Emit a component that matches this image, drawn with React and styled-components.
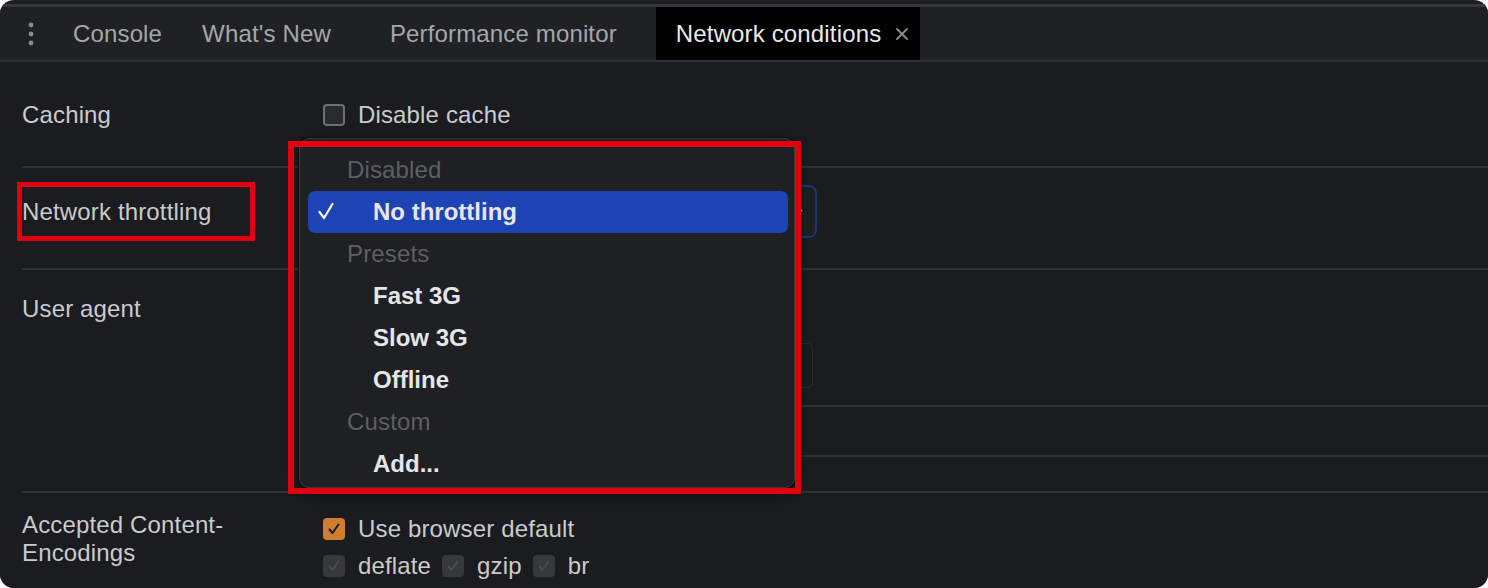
import React from "react";
import styled, { createGlobalStyle } from "styled-components";

const GlobalStyle = createGlobalStyle`
  html, body {
    margin: 0;
    background: #ffffff;
  }
`;

const Window = styled.div`
  width: 1488px;
  height: 588px;
  box-sizing: border-box;
  padding-top: 4px;
  border-radius: 14px;
  overflow: hidden;
  background: #1e1f22;
  font-family: "Liberation Sans", Arial, sans-serif;
  font-size: 24px;
  letter-spacing: 0.15px;
  color: #c9cbcf;
  display: flex;
  flex-direction: column;
`;

const TabBar = styled.div`
  height: 53px;
  display: flex;
  align-items: stretch;
  background: #202124;
  border-top: 3px solid #36373a;
  border-bottom: 2px solid #2e2f32;
`;

const MenuDots = styled.div`
  width: 53px;
  display: flex;
  align-items: center;
  justify-content: center;
  padding-left: 9px;
  box-sizing: border-box;
`;

const Tab = styled.div`
  display: flex;
  align-items: center;
  padding: ${(p) => (p.$closeable ? "0 11px 0 20px" : "0 20px")};
  background: ${(p) => (p.$active ? "#000000" : "transparent")};
  color: ${(p) => (p.$active ? "#e8e9eb" : "#a4a7ab")};
  white-space: nowrap;
`;

const CloseSlot = styled.span`
  width: 14px;
  height: 14px;
  margin-left: 14px;
  display: flex;
  align-items: center;
  justify-content: center;
`;

const Body = styled.div`
  flex: 1;
  background: #1b1c1f;
`;

const Section = styled.div`
  display: grid;
  grid-template-columns: 301px 1fr;
  margin-left: 22px;
  padding: ${(p) => p.$pad};
  border-bottom: 2px solid #313235;
  align-items: ${(p) => (p.$center ? "center" : "start")};

  &:last-child {
    border-bottom: none;
  }
`;

const Label = styled.div`
  line-height: 28px;
  padding-right: 40px;
`;

const MarkedLabel = styled.div`
  width: 228px;
  height: 49px;
  display: flex;
  align-items: center;
  outline: 5px solid #e3000e;
`;

const Check = styled.label`
  display: flex;
  align-items: center;
  gap: 13px;
  height: ${(p) => p.$h || 28}px;
  color: #c9cbcf;
`;

const Box = styled.span`
  width: 22px;
  height: 22px;
  box-sizing: border-box;
  border-radius: 4px;
  display: flex;
  align-items: center;
  justify-content: center;
  flex-shrink: 0;
  background: ${(p) =>
    p.$variant === "checked" ? "#cf7f2c" : p.$variant === "disabled" ? "#37383b" : "#2a2b2e"};
  border: ${(p) => (p.$variant === "plain" ? "2px solid #6e7074" : "none")};
`;

const CheckRow = styled.div`
  display: flex;
  align-items: center;
  gap: 11px;
`;

const SelectWrap = styled.div`
  position: relative;
  width: 494px;
  height: 53px;
`;

const SelectBox = styled.div`
  height: 100%;
  box-sizing: border-box;
  border: 2px solid #1b3670;
  border-radius: 8px;
  background: #1e1f22;
  display: flex;
  align-items: center;
  justify-content: flex-end;
  padding-right: 12px;
`;

const Menu = styled.div`
  position: absolute;
  left: -24px;
  top: -47px;
  width: 496px;
  height: 350px;
  box-sizing: border-box;
  padding: 10px 6px 2px 8px;
  background: #1f2023;
  border: 1px solid #3a3b3e;
  border-radius: 10px;
  box-shadow: 0 0 0 1px #0b0b0c, 0 6px 18px rgba(0, 0, 0, 0.5);
  z-index: 2;
`;

const MenuHeader = styled.div`
  height: 42px;
  display: flex;
  align-items: center;
  padding-left: 39px;
  color: #5d5f63;
`;

const MenuOption = styled.div`
  height: 42px;
  display: grid;
  grid-template-columns: 55px 1fr;
  align-items: center;
  padding-left: 10px;
  border-radius: 7px;
  font-weight: 700;
  letter-spacing: 0;
  color: #e6e6e8;
  background: ${(p) => (p.$selected ? "#1d43b4" : "transparent")};
`;

const Annotation = styled.div`
  position: absolute;
  left: -35px;
  top: -44px;
  width: 513px;
  height: 353px;
  box-sizing: border-box;
  border: 6px solid #e3000e;
  z-index: 3;
  pointer-events: none;
`;

const AgentColumn = styled.div`
  display: flex;
  flex-direction: column;
`;

const Spacer = styled.div`
  height: ${(p) => p.$h}px;
`;

const AgentInput = styled.div`
  width: 490px;
  height: 45px;
  margin-top: 20px;
  box-sizing: border-box;
  border: 1px solid #2c2d30;
  border-radius: 5px;
`;

const HintBlock = styled.div`
  height: ${(p) => p.$h}px;
  box-sizing: border-box;
  margin-top: ${(p) => p.$mt || 0}px;
  border-top: ${(p) => (p.$line ? "2px solid #313235" : "none")};
`;

const EncodingColumn = styled.div`
  display: flex;
  flex-direction: column;
`;

const Dots = () => (
  <svg width="8" height="26" viewBox="0 0 8 26">
    <circle cx="4" cy="4" r="2.4" fill="#8a8b8f" />
    <circle cx="4" cy="13" r="2.4" fill="#8a8b8f" />
    <circle cx="4" cy="22" r="2.4" fill="#8a8b8f" />
  </svg>
);

const CloseIcon = () => (
  <svg width="14" height="14" viewBox="0 0 14 14">
    <path d="M2 2 L12 12 M12 2 L2 12" stroke="#8d8e91" strokeWidth="1.8" strokeLinecap="round" />
  </svg>
);

const Tick = ({ color = "#1b1c1f", size = 14 }) => (
  <svg width={size} height={size} viewBox="0 0 14 14">
    <path d="M2.5 7.5 L5.5 11 L11.5 2.5" stroke={color} strokeWidth="2" fill="none" strokeLinecap="round" strokeLinejoin="round" />
  </svg>
);

const MenuTick = () => (
  <svg width="16" height="18" viewBox="0 0 16 18">
    <path d="M1.5 10 L6 16 L14.5 2" stroke="#ffffff" strokeWidth="2.2" fill="none" strokeLinecap="round" strokeLinejoin="round" />
  </svg>
);

const Caret = () => (
  <svg width="10" height="8" viewBox="0 0 10 8">
    <path d="M1 2 L5 6 L9 2" stroke="#8d8e91" strokeWidth="1.6" fill="none" />
  </svg>
);

const tabs = [
  { name: "Console" },
  { name: "What's New", closeable: true },
  { name: "Performance monitor", closeable: true },
  { name: "Network conditions", closeable: true, active: true },
];

const options = [
  { kind: "header", text: "Disabled" },
  { kind: "option", text: "No throttling", selected: true },
  { kind: "header", text: "Presets" },
  { kind: "option", text: "Fast 3G" },
  { kind: "option", text: "Slow 3G" },
  { kind: "option", text: "Offline" },
  { kind: "header", text: "Custom" },
  { kind: "option", text: "Add..." },
];

const App = () => {
  return (
    <>
      <GlobalStyle />
      <Window>
        <TabBar>
          <MenuDots>
            <Dots />
          </MenuDots>
          {tabs.map((t) => (
            <Tab key={t.name} $active={t.active} $closeable={t.closeable}>
              {t.name}
              {t.closeable && <CloseSlot>{t.active && <CloseIcon />}</CloseSlot>}
            </Tab>
          ))}
        </TabBar>

        <Body>
          <Section $pad="39px 0 37px">
            <Label>Caching</Label>
            <Check>
              <Box $variant="plain" />
              Disable cache
            </Check>
          </Section>

          <Section $pad="17px 0 30px" $center>
            <MarkedLabel>Network throttling</MarkedLabel>
            <SelectWrap>
              <SelectBox>
                <Caret />
              </SelectBox>
              <Menu>
                {options.map((o) =>
                  o.kind === "header" ? (
                    <MenuHeader key={o.text}>{o.text}</MenuHeader>
                  ) : (
                    <MenuOption key={o.text} $selected={o.selected}>
                      <span>{o.selected && <MenuTick />}</span>
                      <span>{o.text}</span>
                    </MenuOption>
                  )
                )}
              </Menu>
              <Annotation />
            </SelectWrap>
          </Section>

          <Section $pad="25px 0 0">
            <Label>User agent</Label>
            <AgentColumn>
              <Spacer $h={28} />
              <AgentInput />
              <HintBlock $h={50} $mt={17} $line />
              <HintBlock $h={36} $line />
            </AgentColumn>
          </Section>

          <Section $pad="18px 0 0">
            <Label>Accepted Content-Encodings</Label>
            <EncodingColumn>
              <Check $h={36}>
                <Box $variant="checked">
                  <Tick />
                </Box>
                Use browser default
              </Check>
              <CheckRow>
                <Check $h={37}>
                  <Box $variant="disabled">
                    <Tick color="#4a4b4f" />
                  </Box>
                  deflate
                </Check>
                <Check $h={37}>
                  <Box $variant="disabled">
                    <Tick color="#4a4b4f" />
                  </Box>
                  gzip
                </Check>
                <Check $h={37}>
                  <Box $variant="disabled">
                    <Tick color="#4a4b4f" />
                  </Box>
                  br
                </Check>
              </CheckRow>
            </EncodingColumn>
          </Section>
        </Body>
      </Window>
    </>
  );
};

export default App;
